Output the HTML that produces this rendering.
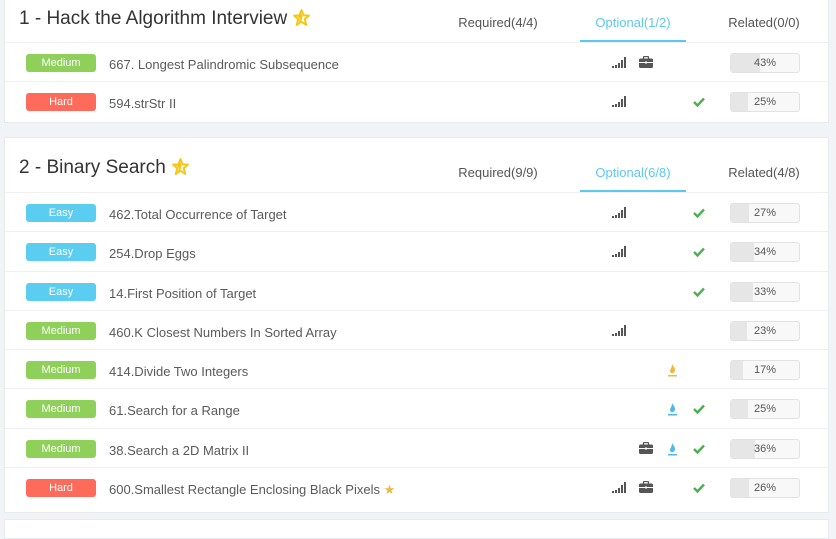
<!DOCTYPE html>
<html><head><meta charset="utf-8"><style>
*{margin:0;padding:0;box-sizing:border-box}
html,body{width:836px;height:524px}
body{background:#f2f3f7;font-family:"Liberation Sans",sans-serif;position:relative;overflow:hidden;color:#555}
.card{position:absolute;left:4px;width:825px;background:#fff;border:1px solid #e8eaee}
.hd{position:relative;height:43px;border-bottom:1px solid #eef0f4}
.title{position:absolute;left:14px;top:8px;font-size:19px;color:#333}
.title svg{vertical-align:-2px;margin-left:6px}
.tab{position:absolute;top:15px;font-size:13px;color:#555;text-align:center;width:106px}
.tab.on{color:#5bc8ef;border-bottom:2px solid #5bc8ef;height:27px}
.row{position:relative;height:39.3px;border-bottom:1px solid #eef0f4}
.row:last-child{border-bottom:none}
.b{position:absolute;left:21px;top:11px;width:70px;height:18px;border-radius:3px;color:#fff;font-size:11px;text-align:center;line-height:18px}
.m{background:#8fd05a}.h{background:#ff6b5b}.e{background:#5bcdf0}
.t{position:absolute;left:104px;top:14px;font-size:13px;color:#5a5a5a}
.ic{position:absolute;top:13px}
.p{position:absolute;left:725px;top:10px;width:70px;height:20px;border:1px solid #e2e2e2;border-radius:3px;background:#f8f8f8;overflow:hidden;font-size:11px;text-align:center;line-height:18px;color:#555}
.p i{position:absolute;left:0;top:0;bottom:0;background:#e6e6e6}
.p span{position:relative}
</style></head><body>
<svg width="0" height="0" style="position:absolute"><defs>
<symbol id="sig" viewBox="0 0 14 12"><rect x="0" y="10" width="2" height="2" fill="#555"/><rect x="3" y="9" width="2" height="3" fill="#555"/><rect x="6" y="7" width="2" height="5" fill="#555"/><rect x="9" y="4" width="2" height="8" fill="#555"/><rect x="12" y="1" width="2" height="11" fill="#555"/></symbol>
<symbol id="bag" viewBox="0 0 14 12"><rect x="4.5" y="0.5" width="5" height="3" rx="1" fill="none" stroke="#555" stroke-width="1.3"/><rect x="0" y="2.5" width="14" height="9.5" rx="1.5" fill="#555"/><rect x="0" y="6" width="14" height="1" fill="#fff"/><rect x="6" y="5.5" width="2" height="2" fill="#fff"/></symbol>
<symbol id="chk" viewBox="0 0 12 10"><path d="M1 5 L4.5 8.5 L11 1.5" fill="none" stroke="#4cb050" stroke-width="2.4"/></symbol>
<symbol id="star" viewBox="0 0 16 16"><path d="M8 1 L10 6 L15 6.2 L11 9.5 L12.5 15 L8 12 L3.5 15 L5 9.5 L1 6.2 L6 6 Z" fill="#fff" stroke="#f5c518" stroke-width="1.8" stroke-linejoin="round"/><path d="M8 4 L9 7 L8 11 L5.5 12.5 L6.5 9 L4 7 Z" fill="#f5c518"/></symbol>
</defs></svg>

<div class="card" style="top:-1px;height:124px">
<div class="hd"><div class="title">1 - Hack the Algorithm Interview<svg width="17" height="17"><use href="#star"/></svg></div>
<div class="tab" style="left:440px">Required(4/4)</div>
<div class="tab on" style="left:575px">Optional(1/2)</div>
<div class="tab" style="left:706px">Related(0/0)</div></div>
<div class="row"><div class="b m">Medium</div><div class="t">667. Longest Palindromic Subsequence</div>
<svg class="ic" style="left:607px" width="14" height="12"><use href="#sig"/></svg><svg class="ic" style="left:634px" width="14" height="12"><use href="#bag"/></svg>
<div class="p"><i style="width:43%"></i><span>43%</span></div></div>
<div class="row"><div class="b h">Hard</div><div class="t">594.strStr II</div>
<svg class="ic" style="left:607px" width="14" height="12"><use href="#sig"/></svg><svg class="ic" style="left:688px;top:15px" width="12" height="10"><use href="#chk"/></svg>
<div class="p"><i style="width:25%"></i><span>25%</span></div></div>
</div>

<div class="card" style="top:137px;height:376px">
<div class="hd" style="height:55px"><div class="title" style="top:19px">2 - Binary Search<svg width="17" height="17"><use href="#star"/></svg></div>
<div class="tab" style="left:440px;top:27px">Required(9/9)</div>
<div class="tab on" style="left:575px;top:27px">Optional(6/8)</div>
<div class="tab" style="left:706px;top:27px">Related(4/8)</div></div>

<div class="row"><div class="b e">Easy</div><div class="t">462.Total Occurrence of Target</div>
<svg class="ic" style="left:607px" width="14" height="12"><use href="#sig"/></svg><svg class="ic" style="left:688px;top:15px" width="12" height="10"><use href="#chk"/></svg>
<div class="p"><i style="width:27%"></i><span>27%</span></div></div>
<div class="row"><div class="b e">Easy</div><div class="t">254.Drop Eggs</div>
<svg class="ic" style="left:607px" width="14" height="12"><use href="#sig"/></svg><svg class="ic" style="left:688px;top:15px" width="12" height="10"><use href="#chk"/></svg>
<div class="p"><i style="width:34%"></i><span>34%</span></div></div>
<div class="row"><div class="b e">Easy</div><div class="t">14.First Position of Target</div>
<svg class="ic" style="left:688px;top:15px" width="12" height="10"><use href="#chk"/></svg>
<div class="p"><i style="width:33%"></i><span>33%</span></div></div>
<div class="row"><div class="b m">Medium</div><div class="t">460.K Closest Numbers In Sorted Array</div>
<svg class="ic" style="left:607px" width="14" height="12"><use href="#sig"/></svg>
<div class="p"><i style="width:23%"></i><span>23%</span></div></div>
<div class="row"><div class="b m">Medium</div><div class="t">414.Divide Two Integers</div>
<svg class="ic" style="left:662px" width="10" height="14"><path d="M5 1 C7 4 9 6 7.5 9 C6 11 3 10.5 3 8 C3 6 5 5 5 1Z" fill="#f5b73b"/><rect x="1" y="12" width="9" height="1.5" fill="#f5b73b"/></svg>
<div class="p"><i style="width:17%"></i><span>17%</span></div></div>
<div class="row"><div class="b m">Medium</div><div class="t">61.Search for a Range</div>
<svg class="ic" style="left:662px" width="10" height="14"><path d="M5 1 C7 4 9 6 7.5 9 C6 11 3 10.5 3 8 C3 6 5 5 5 1Z" fill="#4fb9ef"/><rect x="1" y="12" width="9" height="1.5" fill="#4fb9ef"/></svg>
<svg class="ic" style="left:688px;top:15px" width="12" height="10"><use href="#chk"/></svg>
<div class="p"><i style="width:25%"></i><span>25%</span></div></div>
<div class="row"><div class="b m">Medium</div><div class="t">38.Search a 2D Matrix II</div>
<svg class="ic" style="left:634px" width="14" height="12"><use href="#bag"/></svg>
<svg class="ic" style="left:662px" width="10" height="14"><path d="M5 1 C7 4 9 6 7.5 9 C6 11 3 10.5 3 8 C3 6 5 5 5 1Z" fill="#4fb9ef"/><rect x="1" y="12" width="9" height="1.5" fill="#4fb9ef"/></svg>
<svg class="ic" style="left:688px;top:15px" width="12" height="10"><use href="#chk"/></svg>
<div class="p"><i style="width:36%"></i><span>36%</span></div></div>
<div class="row"><div class="b h">Hard</div><div class="t">600.Smallest Rectangle Enclosing Black Pixels <span style="color:#f5b73b;font-size:13px">★</span></div>
<svg class="ic" style="left:607px" width="14" height="12"><use href="#sig"/></svg><svg class="ic" style="left:634px" width="14" height="12"><use href="#bag"/></svg>
<svg class="ic" style="left:688px;top:15px" width="12" height="10"><use href="#chk"/></svg>
<div class="p"><i style="width:26%"></i><span>26%</span></div></div>
</div>
<div class="card" style="top:519px;height:20px"></div>
</body></html>
